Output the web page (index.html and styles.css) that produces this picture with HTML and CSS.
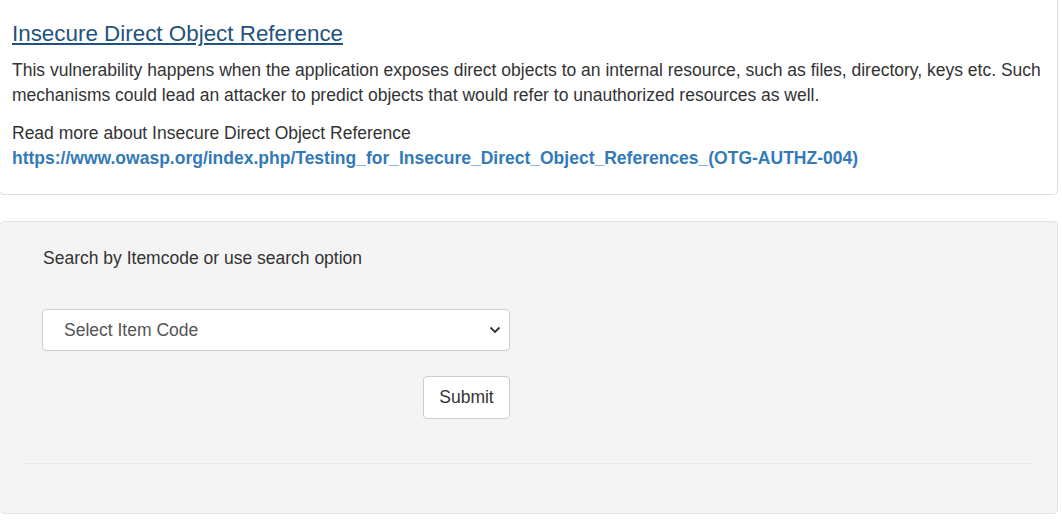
FILE: index.html
```html
<!DOCTYPE html>
<html>
<head>
<meta charset="utf-8">
<link rel="stylesheet" href="styles.css">
</head>
<body>
<div class="page">
  <div class="card">
    <h3 class="title"><a href="#">Insecure Direct Object Reference</a></h3>
    <p class="desc">This vulnerability happens when the application exposes direct objects to an internal resource, such as files, directory, keys etc. Such mechanisms could lead an attacker to predict objects that would refer to unauthorized resources as well.</p>
    <p class="more">Read more about Insecure Direct Object Reference<br><a class="ref" href="#">https://www.owasp.org/index.php/Testing_for_Insecure_Direct_Object_References_(OTG-AUTHZ-004)</a></p>
  </div>
  <div class="well">
    <div class="form">
      <label class="lbl">Search by Itemcode or use search option</label>
      <div class="select">
        <span>Select Item Code</span>
        <svg width="12" height="8" viewBox="0 0 12 8"><path d="M1.5 1.5 L6 6 L10.5 1.5" fill="none" stroke="#333" stroke-width="1.8"/></svg>
      </div>
      <div class="actions"><button class="btn">Submit</button></div>
    </div>
    <hr class="sep">
  </div>
</div>
</body>
</html>
```
FILE: styles.css
```css
* { box-sizing: border-box; }
html, body { margin: 0; padding: 0; background: #fff; }
body {
  font-family: "Liberation Sans", Arial, sans-serif;
  font-size: 17.5px;
  color: #333;
}
.page { margin-left: -1px; width: 1059px; }
.card {
  margin-top: -1px;
  border: 1px solid #ddd;
  border-top: none;
  border-radius: 0 0 5px 5px;
  padding: 21px 12px 23px 12px;
  background: #fff;
}
.title { margin: 0 0 10px; font-size: 22.4px; font-weight: normal; line-height: 28px; }
.title a { color: #23527c; text-decoration: underline; }
.desc { margin: 0 0 13px; line-height: 25px; }
.more { margin: 0; line-height: 25px; }
.ref { color: #337ab7; font-weight: bold; text-decoration: none; }
.well {
  margin-top: 26px;
  background: #f4f4f4;
  border: 1px solid #e3e3e3;
  border-radius: 5px;
  padding: 24px 24px 49px 24px;
}
.form { padding: 0 18px; width: 510px; }
.lbl { display: block; line-height: 25px; margin: 0 0 38px; padding-left: 1px; }
.select {
  width: 468px;
  height: 42px;
  background: #fff;
  border: 1px solid #ccc;
  border-radius: 4px;
  display: flex;
  align-items: center;
  justify-content: space-between;
  padding: 0 8px 0 21px;
  color: #555;
  font-size: 17.5px;
}
.actions { display: flex; justify-content: flex-end; margin-top: 25px; width: 468px; }
.btn {
  font-family: inherit;
  font-size: 17.5px;
  color: #333;
  background: #fff;
  border: 1px solid #ccc;
  border-radius: 4px;
  width: 87px;
  height: 43px;
}
.sep { margin: 44px 0 0; border: 0; border-top: 1px solid #e9e9e9; }
```
